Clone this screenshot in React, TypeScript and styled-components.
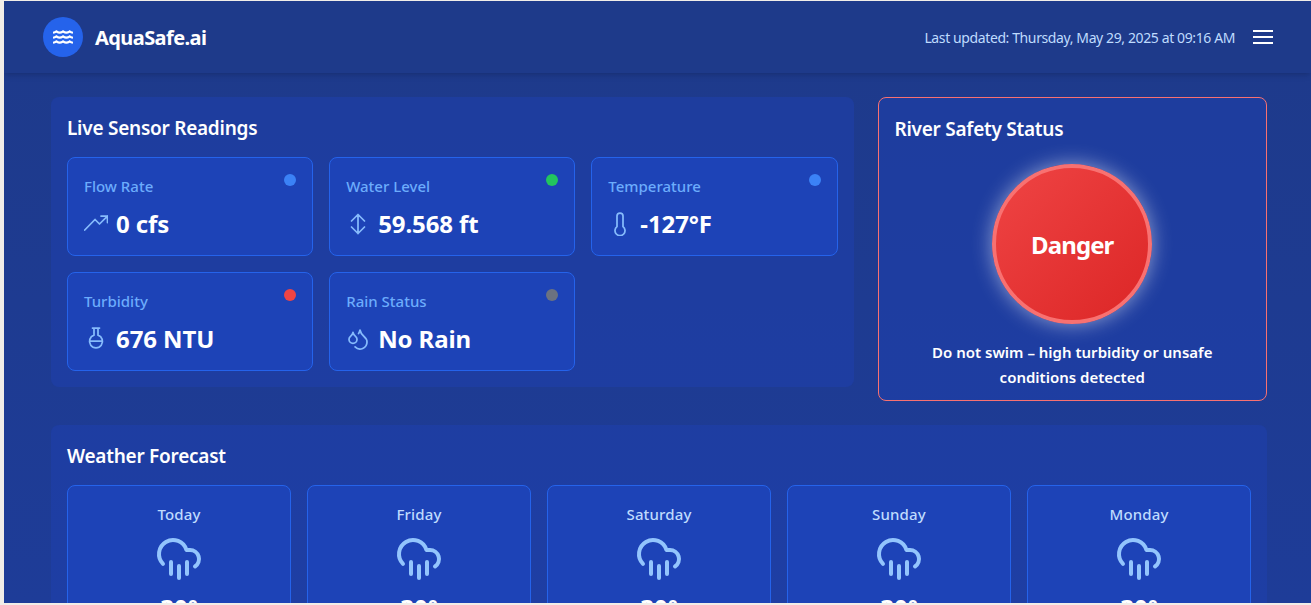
import styled, { createGlobalStyle } from 'styled-components'
import { CloudRain, Droplets } from 'lucide-react'
import { FaWater } from 'react-icons/fa'

const GlobalStyle = createGlobalStyle`
  html, body {
    margin: 0;
    height: 100%;
    overflow: hidden;
    background: #f1ede8;
  }
  body {
    font-family: 'Noto Sans', 'Open Sans', sans-serif;
  }
`

const Page = styled.div`
  height: 602px;
  margin: 1px 0 0 4px;
  overflow: hidden;
  background: linear-gradient(180deg, #1e3a8a 0%, #1e3c98 100%);
  color: #ffffff;
`

const Header = styled.header`
  display: flex;
  align-items: center;
  justify-content: space-between;
  height: 72px;
  padding: 0 38px 0 39px;
  background: #1e3a8a;
  box-shadow: 0 4px 6px -1px rgba(0, 0, 0, 0.1), 0 2px 4px -2px rgba(0, 0, 0, 0.1);
`

const Brand = styled.div`
  display: flex;
  align-items: center;
  gap: 12px;
`

const LogoBadge = styled.div`
  display: flex;
  align-items: center;
  justify-content: center;
  width: 40px;
  height: 40px;
  border-radius: 50%;
  background: #2563eb;
`

const BrandName = styled.h1`
  margin: 0;
  font-size: 20px;
  font-weight: 700;
  letter-spacing: -0.58px;
`

const HeaderRight = styled.div`
  display: flex;
  align-items: center;
  gap: 18px;
`

const Updated = styled.span`
  font-size: 14px;
  color: #bfdbfe;
  letter-spacing: -0.39px;
`

const Main = styled.main`
  padding: 24px 44px 0 47px;
`

const TopGrid = styled.div`
  display: grid;
  grid-template-columns: 802.5fr 389.5fr;
  gap: 24px;
  align-items: start;
  margin-bottom: 24px;
`

const Panel = styled.section`
  padding: 16px;
  border-radius: 8px;
  background: rgba(30, 64, 175, 0.5);
`

const PanelTitle = styled.h2`
  margin: 0 0 14px;
  font-size: 19px;
  line-height: 30px;
  font-weight: 600;
  letter-spacing: -0.25px;
`

const SensorGrid = styled.div`
  display: grid;
  grid-template-columns: repeat(3, 1fr);
  gap: 16px;
`

const SensorCard = styled.div`
  position: relative;
  height: 99px;
  box-sizing: border-box;
  padding: 16px;
  border: 1px solid #2563eb;
  border-radius: 8px;
  background: #1d43b7;
`

const StatusDot = styled.span<{ $color: string }>`
  position: absolute;
  top: 16px;
  right: 16px;
  width: 12px;
  height: 12px;
  border-radius: 50%;
  background: ${(p) => p.$color};
`

const SensorLabel = styled.div`
  font-size: 15px;
  line-height: 24px;
  font-weight: 500;
  color: #6cacfc;
`

const SensorValue = styled.div`
  display: flex;
  align-items: center;
  gap: 8px;
  margin-top: 10px;
  font-size: 24px;
  line-height: 32px;
  font-weight: 700;
  letter-spacing: -0.1px;
  svg {
    color: #86bbfc;
    stroke-width: 1.75;
  }
`

const StatusPanel = styled.section`
  display: flex;
  flex-direction: column;
  align-items: stretch;
  height: 304px;
  box-sizing: border-box;
  padding: 16px;
  border: 1px solid #f87171;
  border-radius: 8px;
  background: rgba(30, 64, 175, 0.5);
`

const StatusBody = styled.div`
  display: flex;
  flex-direction: column;
  align-items: center;
`

const DangerCircle = styled.div`
  display: flex;
  align-items: center;
  justify-content: center;
  box-sizing: border-box;
  width: 160px;
  height: 160px;
  margin-top: 6px;
  border: 4px solid #f87171;
  border-radius: 50%;
  background: linear-gradient(135deg, #ef4444, #dc2626);
  box-shadow: 0 0 20px rgba(255, 255, 255, 0.5);
  font-size: 24px;
  font-weight: 700;
  letter-spacing: -0.9px;
`

const StatusNote = styled.p`
  margin: 16px 0 0;
  font-size: 15px;
  line-height: 25px;
  font-weight: 600;
  text-align: center;
`

const ForecastGrid = styled.div`
  display: grid;
  grid-template-columns: repeat(5, 1fr);
  gap: 16px;
`

const ForecastCard = styled.div`
  display: flex;
  flex-direction: column;
  align-items: center;
  padding: 16px;
  border: 1px solid #2563eb;
  border-radius: 8px;
  background: #1d43b7;
  svg {
    color: #93c5fd;
  }
`

const DayName = styled.div`
  margin-bottom: 8px;
  font-size: 15px;
  line-height: 24px;
  font-weight: 500;
  color: #bfdbfe;
  letter-spacing: 0.15px;
`

const Temp = styled.div`
  margin-top: 10px;
  font-size: 24px;
  line-height: 32px;
  font-weight: 700;
`

const HamburgerIcon = () => (
  <svg width="20" height="16" viewBox="0 0 20 16" fill="none" stroke="#ffffff" strokeWidth="2">
    <path d="M0 2h20M0 8h20M0 14h20" />
  </svg>
)

const TrendIcon = ({ size }: { size: number }) => (
  <svg width={size} height={size} viewBox="0 0 24 24" fill="none" stroke="currentColor" strokeLinecap="round" strokeLinejoin="round">
    <path d="M.75 18 11 7.5l4.5 4.5 8-8M17 4h6.5v6.5" />
  </svg>
)

const ArrowsIcon = ({ size }: { size: number }) => (
  <svg width={size} height={size} viewBox="0 0 24 24" fill="none" stroke="currentColor" strokeLinecap="round" strokeLinejoin="round">
    <path d="M12 2.5v19M5.5 9 12 2.5 18.500 9M5.500 15l6.500 6.500 6.500-6.500" />
  </svg>
)

const ThermometerIcon = ({ size }: { size: number }) => (
  <svg width={size} height={size} viewBox="0 0 24 24" fill="none" stroke="currentColor" strokeLinecap="round" strokeLinejoin="round">
    <path d="M9 14.600V4a3 3 0 0 1 6 0v10.600a5 5 0 1 1-6 0z" />
  </svg>
)

const FlaskIcon = ({ size }: { size: number }) => (
  <svg width={size} height={size} viewBox="0 0 24 24" fill="none" stroke="currentColor" strokeLinecap="round" strokeLinejoin="round">
    <path d="M8.500 1h7M10 1v7.200a6.500 6.500 0 1 0 4 0V1M5.600 14h12.800" />
  </svg>
)

type IconType = React.ComponentType<{ size: number }>

interface Sensor {
  label: string
  value: string
  dot: string
  icon: IconType
}

const sensors: Sensor[] = [
  { label: 'Flow Rate', value: '0 cfs', dot: '#3b82f6', icon: TrendIcon },
  { label: 'Water Level', value: '59.568 ft', dot: '#22c55e', icon: ArrowsIcon },
  { label: 'Temperature', value: '-127°F', dot: '#3b82f6', icon: ThermometerIcon },
  { label: 'Turbidity', value: '676 NTU', dot: '#ef4444', icon: FlaskIcon },
  { label: 'Rain Status', value: 'No Rain', dot: '#6b7280', icon: Droplets },
]

const days = ['Today', 'Friday', 'Saturday', 'Sunday', 'Monday']

const App = () => {
  return (
    <>
      <GlobalStyle />
      <Page>
        <Header>
          <Brand>
            <LogoBadge>
              <FaWater size={20} color="#ffffff" />
            </LogoBadge>
            <BrandName>AquaSafe.ai</BrandName>
          </Brand>
          <HeaderRight>
            <Updated>Last updated: Thursday, May 29, 2025 at 09:16 AM</Updated>
            <HamburgerIcon />
          </HeaderRight>
        </Header>
        <Main>
          <TopGrid>
            <Panel>
              <PanelTitle>Live Sensor Readings</PanelTitle>
              <SensorGrid>
                {sensors.map((s) => (
                  <SensorCard key={s.label}>
                    <StatusDot $color={s.dot} />
                    <SensorLabel>{s.label}</SensorLabel>
                    <SensorValue>
                      <s.icon size={24} />
                      {s.value}
                    </SensorValue>
                  </SensorCard>
                ))}
              </SensorGrid>
            </Panel>
            <StatusPanel>
              <PanelTitle>River Safety Status</PanelTitle>
              <StatusBody>
                <DangerCircle>Danger</DangerCircle>
                <StatusNote>
                  Do not swim – high turbidity or unsafe conditions detected
                </StatusNote>
              </StatusBody>
            </StatusPanel>
          </TopGrid>
          <Panel>
            <PanelTitle>Weather Forecast</PanelTitle>
            <ForecastGrid>
              {days.map((day) => (
                <ForecastCard key={day}>
                  <DayName>{day}</DayName>
                  <CloudRain size={48} />
                  <Temp>30°</Temp>
                </ForecastCard>
              ))}
            </ForecastGrid>
          </Panel>
        </Main>
      </Page>
    </>
  )
}

export default App
